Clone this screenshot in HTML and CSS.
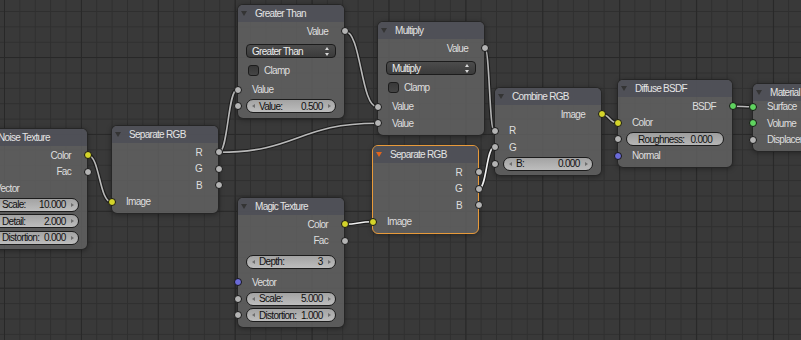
FILE: index.html
```html
<!DOCTYPE html>
<html>
<head>
<meta charset="utf-8">
<link rel="stylesheet" href="styles.css">
</head>
<body>
<div class="editor">
  <svg class="links" width="801" height="340" viewBox="0 0 801 340">
    <g class="outline">
      <path d="M88 155.25 C99.5 155.25 99.5 201.75 111 201.75"/>
      <path d="M219 152.25 C228 152.25 228 89.75 237 89.75"/>
      <path d="M219 152.25 C298 152.25 298 123.25 377 123.25"/>
      <path d="M345 31.25 C361 31.25 361 106.75 377 106.75"/>
      <path d="M485 48.25 C489.5 48.25 489.5 130.75 494 130.75"/>
      <path d="M345 224.25 C358.5 224.25 358.5 221.75 372 221.75"/>
      <path d="M479 188.75 C486.5 188.75 486.5 147.25 494 147.25"/>
      <path d="M602 114.25 C609.5 114.25 609.5 122.75 617 122.75"/>
      <path d="M733 106.25 C742.5 106.25 742.5 106.75 752 106.75"/>
    </g>
    <g class="wire">
      <path d="M88 155.25 C99.5 155.25 99.5 201.75 111 201.75"/>
      <path d="M219 152.25 C228 152.25 228 89.75 237 89.75"/>
      <path d="M219 152.25 C298 152.25 298 123.25 377 123.25"/>
      <path d="M345 31.25 C361 31.25 361 106.75 377 106.75"/>
      <path d="M485 48.25 C489.5 48.25 489.5 130.75 494 130.75"/>
      <path class="hl" d="M345 224.25 C358.5 224.25 358.5 221.75 372 221.75"/>
      <path class="hl" d="M479 188.75 C486.5 188.75 486.5 147.25 494 147.25"/>
      <path d="M602 114.25 C609.5 114.25 609.5 122.75 617 122.75"/>
      <path d="M733 106.25 C742.5 106.25 742.5 106.75 752 106.75"/>
    </g>
  </svg>

  <!-- Noise Texture -->
  <div class="node n-noise">
    <div class="node-head"><span class="tri"></span><span class="title">Noise Texture</span></div>
    <div class="node-body">
      <div class="row out"><span>Color</span><i class="sock yellow"></i></div>
      <div class="row out"><span>Fac</span><i class="sock grey"></i></div>
      <div class="row in"><i class="sock blue"></i><span>Vector</span></div>
      <div class="row frow"><i class="sock grey"></i><div class="field"><b class="arr l"></b><span class="fl">Scale:</span><span class="fv">10.000</span><b class="arr r"></b></div></div>
      <div class="row frow"><i class="sock grey"></i><div class="field"><b class="arr l"></b><span class="fl">Detail:</span><span class="fv">2.000</span><b class="arr r"></b></div></div>
      <div class="row frow"><i class="sock grey"></i><div class="field"><b class="arr l"></b><span class="fl">Distortion:</span><span class="fv">0.000</span><b class="arr r"></b></div></div>
    </div>
  </div>

  <!-- Separate RGB (left) -->
  <div class="node n-sep1">
    <div class="node-head"><span class="tri"></span><span class="title">Separate RGB</span></div>
    <div class="node-body">
      <div class="row out"><span>R</span><i class="sock grey"></i></div>
      <div class="row out"><span>G</span><i class="sock grey"></i></div>
      <div class="row out"><span>B</span><i class="sock grey"></i></div>
      <div class="row in"><i class="sock yellow"></i><span>Image</span></div>
    </div>
  </div>

  <!-- Greater Than -->
  <div class="node n-greater">
    <div class="node-head"><span class="tri"></span><span class="title">Greater Than</span></div>
    <div class="node-body">
      <div class="row out"><span>Value</span><i class="sock grey"></i></div>
      <div class="buttons">
        <div class="brow"><div class="menu"><span>Greater Than</span><b class="updown"></b></div></div>
        <div class="brow"><span class="check"></span><span class="check-label">Clamp</span></div>
      </div>
      <div class="row in"><i class="sock grey"></i><span>Value</span></div>
      <div class="row frow"><i class="sock grey"></i><div class="field"><b class="arr l"></b><span class="fl">Value:</span><span class="fv">0.500</span><b class="arr r"></b></div></div>
    </div>
  </div>

  <!-- Multiply -->
  <div class="node n-multiply">
    <div class="node-head"><span class="tri"></span><span class="title">Multiply</span></div>
    <div class="node-body">
      <div class="row out"><span>Value</span><i class="sock grey"></i></div>
      <div class="buttons">
        <div class="brow"><div class="menu"><span>Multiply</span><b class="updown"></b></div></div>
        <div class="brow"><span class="check"></span><span class="check-label">Clamp</span></div>
      </div>
      <div class="row in"><i class="sock grey"></i><span>Value</span></div>
      <div class="row in"><i class="sock grey"></i><span>Value</span></div>
    </div>
  </div>

  <!-- Combine RGB -->
  <div class="node n-combine">
    <div class="node-head"><span class="tri"></span><span class="title">Combine RGB</span></div>
    <div class="node-body">
      <div class="row out"><span>Image</span><i class="sock yellow"></i></div>
      <div class="row in"><i class="sock grey"></i><span>R</span></div>
      <div class="row in"><i class="sock grey"></i><span>G</span></div>
      <div class="row frow"><i class="sock grey"></i><div class="field"><b class="arr l"></b><span class="fl">B:</span><span class="fv">0.000</span><b class="arr r"></b></div></div>
    </div>
  </div>

  <!-- Diffuse BSDF -->
  <div class="node n-diffuse">
    <div class="node-head"><span class="tri"></span><span class="title">Diffuse BSDF</span></div>
    <div class="node-body">
      <div class="row out"><span>BSDF</span><i class="sock green"></i></div>
      <div class="row in"><i class="sock yellow"></i><span>Color</span></div>
      <div class="row frow"><i class="sock grey"></i><div class="field slider"><span class="fl">Roughness:</span><span class="fv">0.000</span></div></div>
      <div class="row in"><i class="sock blue"></i><span>Normal</span></div>
    </div>
  </div>

  <!-- Material Output -->
  <div class="node n-material">
    <div class="node-head"><span class="tri"></span><span class="title">Material Output</span></div>
    <div class="node-body">
      <div class="row in"><i class="sock green"></i><span>Surface</span></div>
      <div class="row in"><i class="sock green"></i><span>Volume</span></div>
      <div class="row in"><i class="sock grey"></i><span>Displacement</span></div>
    </div>
  </div>

  <!-- Magic Texture -->
  <div class="node n-magic">
    <div class="node-head"><span class="tri"></span><span class="title">Magic Texture</span></div>
    <div class="node-body">
      <div class="row out"><span>Color</span><i class="sock yellow"></i></div>
      <div class="row out"><span>Fac</span><i class="sock grey"></i></div>
      <div class="buttons wide">
        <div class="brow"><div class="field"><b class="arr l"></b><span class="fl">Depth:</span><span class="fv">3</span><b class="arr r"></b></div></div>
      </div>
      <div class="row in"><i class="sock blue"></i><span>Vector</span></div>
      <div class="row frow"><i class="sock grey"></i><div class="field"><b class="arr l"></b><span class="fl">Scale:</span><span class="fv">5.000</span><b class="arr r"></b></div></div>
      <div class="row frow"><i class="sock grey"></i><div class="field"><b class="arr l"></b><span class="fl">Distortion:</span><span class="fv">1.000</span><b class="arr r"></b></div></div>
    </div>
  </div>

  <!-- Separate RGB (selected) -->
  <div class="node n-sep2 selected">
    <div class="node-head"><span class="tri"></span><span class="title">Separate RGB</span></div>
    <div class="node-body">
      <div class="row out"><span>R</span><i class="sock grey"></i></div>
      <div class="row out"><span>G</span><i class="sock grey"></i></div>
      <div class="row out"><span>B</span><i class="sock grey"></i></div>
      <div class="row in"><i class="sock yellow"></i><span>Image</span></div>
    </div>
  </div>
</div>
</body>
</html>
```
FILE: styles.css
```css
* { box-sizing: border-box; }
html, body { margin: 0; padding: 0; }
body {
  width: 801px;
  height: 340px;
  overflow: hidden;
  background: #393939;
  font-family: "Liberation Sans", Arial, sans-serif;
  font-size: 10px;
  letter-spacing: -0.7px;
  color: #dedede;
}
.editor {
  position: relative;
  width: 801px;
  height: 340px;
  overflow: hidden;
  background-color: #393939;
  background-image:
    linear-gradient(to right, #282828 1px, transparent 1px),
    linear-gradient(to bottom, #282828 1px, transparent 1px),
    linear-gradient(to right, #2f2f2f 1px, transparent 1px),
    linear-gradient(to bottom, #2f2f2f 1px, transparent 1px);
  background-size: 76.92px 76.92px, 76.92px 76.92px, 15.384px 15.384px, 15.384px 15.384px;
  background-position: 4px 57px, 4px 57px, 4px 11px, 4px 11px;
}
.links { position: absolute; left: 0; top: 0; }
.links path { fill: none; }
.links .outline path { stroke: #1c1c1c; stroke-width: 3.8; stroke-opacity: 0.9; }
.links .wire path { stroke: #b9b9b9; stroke-width: 1.6; }
.links .wire path.hl { stroke: #f2f2f2; }

/* nodes */
.node {
  position: absolute;
  border-radius: 6px;
  background: rgba(98, 98, 98, 0.84);
  border: 1px solid rgba(22, 22, 22, 0.75);
  box-shadow: 0 1px 5px rgba(0, 0, 0, 0.35);
}
.node.selected { border-color: #e89a3a; }
.node-head {
  height: 17px;
  display: flex;
  align-items: center;
  gap: 8px;
  padding-left: 3px;
  background: rgba(78, 79, 86, 0.9);
  border-radius: 5px 5px 0 0;
  white-space: nowrap;
  overflow: hidden;
}
.tri {
  width: 0;
  height: 0;
  border-left: 3px solid transparent;
  border-right: 3px solid transparent;
  border-top: 5px solid #343434;
  flex: none;
}
.selected .tri { border-top-color: #e0651e; }
.title { color: #e4e4e4; }
.node-body { padding: 1px 0 3px; }

.row {
  position: relative;
  height: 16.5px;
  display: flex;
  align-items: center;
  white-space: nowrap;
}
.row.out { justify-content: flex-end; padding-right: 16px; }
.row.in { padding-left: 14px; }
.row.frow { padding: 0 8px; }

.sock {
  position: absolute;
  top: 50%;
  width: 8px;
  height: 8px;
  margin-top: -4px;
  border-radius: 50%;
  border: 1px solid #161616;
}
.row.out .sock { right: -4.5px; }
.row.in .sock, .row.frow .sock { left: -4.5px; }
.sock.grey { background: #b4b4b4; }
.sock.yellow { background: #d4d42a; }
.sock.green { background: #5fd35f; }
.sock.blue { background: #6a6ad8; }

/* buttons section */
.buttons { padding: 2px 0; }
.buttons.wide { padding: 3px 0; }
.brow {
  height: 19px;
  display: flex;
  align-items: center;
  padding: 0 8px;
  white-space: nowrap;
}

.field {
  flex: 1;
  height: 14px;
  display: flex;
  align-items: center;
  padding: 0 4.5px;
  border-radius: 7px;
  border: 1px solid #1c1c1c;
  background: linear-gradient(#a3a3a3, #bdbdbd);
  color: #101010;
  overflow: hidden;
}
.field .fl { margin-left: 4.5px; }
.field .fv { margin-left: auto; margin-right: 5px; }
.field.slider { padding: 0 11px; background: linear-gradient(#9e9e9e, #b6b6b6); }
.field.slider .fl { margin-left: 0; }
.field.slider .fv { margin-right: 0; }
.arr {
  width: 0;
  height: 0;
  flex: none;
  border-top: 2.5px solid transparent;
  border-bottom: 2.5px solid transparent;
}
.arr.l { border-right: 3.5px solid #6e6e6e; }
.arr.r { border-left: 3.5px solid #6e6e6e; }

.menu {
  flex: 1;
  height: 14px;
  display: flex;
  align-items: center;
  padding: 0 5px;
  border-radius: 4px;
  border: 1px solid #1c1c1c;
  background: linear-gradient(#4c4c4c, #3b3b3b);
  color: #ececec;
}
.updown {
  margin-left: auto;
  position: relative;
  width: 5px;
  height: 9px;
}
.updown::before, .updown::after {
  content: "";
  position: absolute;
  left: 0;
  border-left: 2.5px solid transparent;
  border-right: 2.5px solid transparent;
}
.updown::before { top: 0; border-bottom: 3.5px solid #d8d8d8; }
.updown::after { bottom: 0; border-top: 3.5px solid #d8d8d8; }

.check {
  width: 11px;
  height: 11px;
  margin-left: 2px;
  border-radius: 3px;
  border: 1px solid #1c1c1c;
  background: linear-gradient(#383838, #454545);
  flex: none;
}
.check-label { margin-left: 5px; }

/* node placement on the canvas */
.n-noise { left: -20px; top: 128px; width: 108px; }
.n-sep1 { left: 111px; top: 125px; width: 108px; }
.n-greater { left: 237px; top: 4px; width: 108px; }
.n-multiply { left: 377px; top: 21px; width: 108px; }
.n-combine { left: 494px; top: 87px; width: 108px; }
.n-diffuse { left: 617px; top: 79px; width: 116px; }
.n-material { left: 752px; top: 83px; width: 130px; }
.n-material .node-body { margin-top: -3.5px; }
.n-magic { left: 237px; top: 197px; width: 108px; }
.n-sep2 { left: 372px; top: 145px; width: 107px; }
```
